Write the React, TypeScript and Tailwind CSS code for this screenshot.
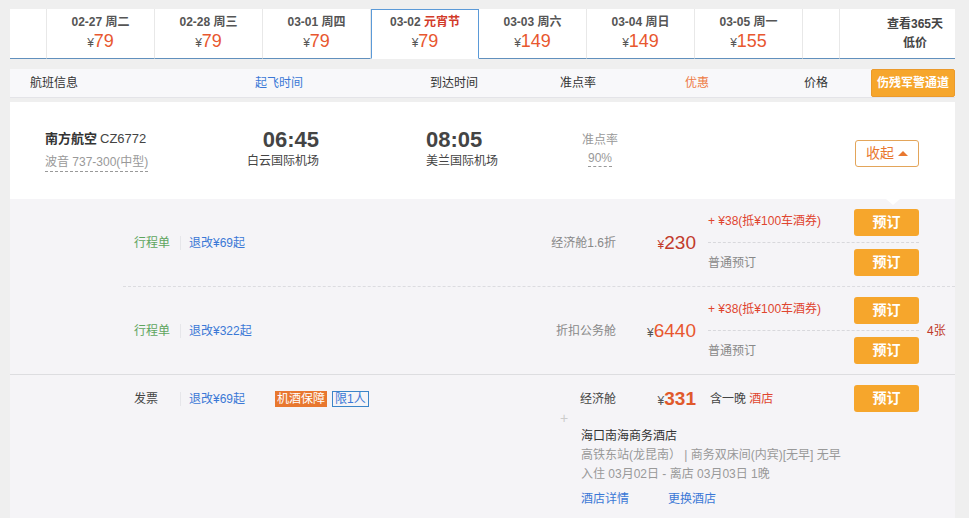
import React from "react";

const dates = [
  { d: "02-27", w: "周二", p: "79" },
  { d: "02-28", w: "周三", p: "79" },
  { d: "03-01", w: "周四", p: "79" },
  { d: "03-02", w: "元宵节", p: "79", sel: true },
  { d: "03-03", w: "周六", p: "149" },
  { d: "03-04", w: "周日", p: "149" },
  { d: "03-05", w: "周一", p: "155" },
];

function BookBtn() {
  return (
    <div className="flex h-[27px] w-[65px] items-center justify-center rounded-[3px] bg-[#f6a62c] text-[14px] font-bold text-white">
      预订
    </div>
  );
}

function LeftInfo({ label, labelCls, refund }: { label: string; labelCls: string; refund: string }) {
  return (
    <div className="flex items-center">
      <div className={"w-[46px] " + labelCls}>{label}</div>
      <div className="h-[14px] w-px bg-[#e6e6ea]" />
      <div className="ml-[8px] text-[#3b78d6]">{refund}</div>
    </div>
  );
}

function FareRow({
  cabin,
  price,
  priceCls,
  yenCls,
  extra,
}: {
  cabin: string;
  price: string;
  priceCls: string;
  yenCls: string;
  extra?: string;
}) {
  return (
    <div className="flex h-[87px] items-center">
      <div className="flex flex-1 items-center pl-[124px]">
        <LeftInfo label="行程单" labelCls="text-[#5ea55e]" refund={cabin === "折扣公务舱" ? "退改¥322起" : "退改¥69起"} />
      </div>
      <div className="w-[120px] text-right text-[#888]">{cabin}</div>
      <div className="w-[80px] text-right">
        <span className={"text-[12px] " + yenCls}>¥</span>
        <span className={"text-[19px] leading-[22px] " + priceCls}>{price}</span>
      </div>
      <div className="ml-[12px] flex w-[211px] flex-col">
        <div className="flex h-[27px] items-center justify-between">
          <span className="-mt-[3px] text-[#e0452f]">+ ¥38(抵¥100车酒券)</span>
          <BookBtn />
        </div>
        <div className="mt-[6px] border-t border-dashed border-[#d8d8dc]" />
        <div className="mt-[6px] flex h-[27px] items-center justify-between">
          <span className="text-[#888]">普通预订</span>
          <BookBtn />
        </div>
      </div>
      <div className="w-[36px] pl-[8px] text-[#c0392b]">{extra}</div>
    </div>
  );
}

export default function App() {
  return (
    <div className="min-h-[518px] bg-[#efefef] pt-[9px] font-[Liberation_Sans,Noto_Sans_CJK_SC,sans-serif] text-[12px] text-[#333]">
      <div className="ml-[10px] w-[945px]">
        {/* date bar */}
        <div className="flex h-[50px] bg-white">
          <div className="w-[37px] border-r border-b border-r-[#e8e8e8] border-b-[#6190bd]" />
          {dates.map((x) =>
            x.sel ? (
              <div
                key={x.d}
                className="flex w-[108px] flex-col items-center border border-[#5b9ad8] border-b-white bg-white pt-[5px]"
              >
                <div className="text-[12px] font-bold leading-[14px] text-[#555]">
                  {x.d} <span className="text-[#d23b2a]">{x.w}</span>
                </div>
                <div className="mt-[1px] leading-[22px]">
                  <span className="text-[12px] text-[#555]">¥</span>
                  <span className="text-[18px] text-[#e8572f]">{x.p}</span>
                </div>
              </div>
            ) : (
              <div
                key={x.d}
                className="flex w-[108px] flex-col items-center border-r border-b border-r-[#e8e8e8] border-b-[#6190bd] pt-[6px]"
              >
                <div className="text-[12px] font-bold leading-[14px] text-[#555]">
                  {x.d} {x.w}
                </div>
                <div className="mt-[1px] leading-[22px]">
                  <span className="text-[12px] text-[#555]">¥</span>
                  <span className="text-[18px] text-[#e8572f]">{x.p}</span>
                </div>
              </div>
            )
          )}
          <div className="w-[37px] border-r border-b border-r-[#e8e8e8] border-b-[#6190bd]" />
          <div className="flex w-[115px] flex-col items-end border-b border-b-[#6190bd] pr-[12px] pt-[6px]">
            <div className="flex flex-col items-center text-[12px] font-bold leading-[19px] text-[#444]">
              <span>查看365天</span>
              <span>低价</span>
            </div>
          </div>
        </div>

        {/* header row */}
        <div className="mt-[10px] flex h-[28px] items-center bg-[#f8f8fa] pl-[20px] shadow-[0_1px_0_#e4e4e8]">
          <div className="w-[225px]">航班信息</div>
          <div className="w-[175px] text-[#3b78d6]">起飞时间</div>
          <div className="w-[130px]">到达时间</div>
          <div className="w-[125px]">准点率</div>
          <div className="w-[119px] text-[#ee7a45]">优惠</div>
          <div className="w-[67px]">价格</div>
          <div className="flex h-[28px] w-[84px] items-center justify-center whitespace-nowrap rounded-[2px] border border-[#eb9a2c] bg-[#f6a62c] text-[12px] font-bold text-white">
            伤残军警通道
          </div>
        </div>

        {/* flight row */}
        <div className="relative mt-[5px] flex h-[97px] items-center bg-white">
          <div className="w-[229px] pl-[35px]">
            <div className="leading-[20px]">
              <span className="text-[13px] font-bold text-[#333]">南方航空</span>
              <span className="ml-[3px] text-[13px] text-[#444]">CZ6772</span>
            </div>
            <div className="mt-[4px] inline-block border-b border-dashed border-[#999] leading-[18px] text-[#999]">
              波音 737-300(中型)
            </div>
          </div>
          <div className="-mt-[2px] w-[80px] text-right">
            <div className="text-[22px] font-bold leading-[24px] text-[#444]">06:45</div>
            <div className="leading-[19px] text-[#444]">白云国际机场</div>
          </div>
          <div className="-mt-[2px] ml-[107px] w-[130px]">
            <div className="text-[22px] font-bold leading-[24px] text-[#444]">08:05</div>
            <div className="leading-[19px] text-[#444]">美兰国际机场</div>
          </div>
          <div className="-mt-[4px] flex w-[88px] flex-col items-center text-[#999]">
            <div className="leading-[19px]">准点率</div>
            <div className="border-b border-dashed border-[#999] leading-[16px]">90%</div>
          </div>
          <div className="ml-auto mr-[36px] mt-[6px] flex h-[27px] w-[64px] items-center justify-center gap-[4px] rounded-[3px] border border-[#e3a55a] text-[14px] text-[#e8782f]">
            <span>收起</span>
            <span className="h-0 w-0 border-x-[5px] border-b-[5px] border-x-transparent border-b-[#e8782f]" />
          </div>
          <span className="absolute bottom-[-6px] left-[876px] h-0 w-0 border-x-[7px] border-t-[6px] border-x-transparent border-t-white" />
        </div>

        {/* expanded fares */}
        <div className="bg-[#f5f4f7]">
          <FareRow cabin="经济舱1.6折" price="230" priceCls="text-[#c23a2b]" yenCls="text-[#c23a2b]" />
          <div className="ml-[113px] border-t border-dashed border-[#dcdce0]" />
          <FareRow cabin="折扣公务舱" price="6440" priceCls="text-[#e8572f]" yenCls="text-[#555]" extra="4张" />
          <div className="border-t border-[#dddde0]" />

          <div className="pb-[20px] pt-[10px]">
            <div className="flex h-[27px] items-center">
              <div className="flex flex-1 items-center pl-[124px]">
                <LeftInfo label="发票" labelCls="text-[#444]" refund="退改¥69起" />
                <span className="ml-[30px] bg-[#e8772f] px-[2px] leading-[16px] text-white">机酒保障</span>
                <span className="ml-[5px] border border-[#3b85c8] px-[2px] leading-[14px] text-[#3b78d6]">限1人</span>
              </div>
              <div className="w-[120px] text-right text-[#444]">经济舱</div>
              <div className="w-[80px] text-right">
                <span className="text-[12px] text-[#555]">¥</span>
                <span className="text-[19px] font-bold leading-[22px] text-[#e0592b]">331</span>
              </div>
              <div className="ml-[12px] flex w-[211px] items-center justify-between">
                <span className="pl-[2px] text-[#444]">
                  含一晚 <span className="text-[#e0452f]">酒店</span>
                </span>
                <BookBtn />
              </div>
              <div className="w-[36px]" />
            </div>
            <div className="ml-[550px] text-[14px] leading-[12px] text-[#ccc]">+</div>
            <div className="ml-[571px] mt-[3px] leading-[19px]">
              <div className="text-[#333]">海口南海商务酒店</div>
              <div className="text-[#999]">高铁东站(龙昆南） | 商务双床间(内宾)[无早] 无早</div>
              <div className="text-[#999]">入住 03月02日 - 离店 03月03日 1晚</div>
              <div className="mt-[6px] flex text-[#3b78d6]">
                <span className="w-[87px]">酒店详情</span>
                <span>更换酒店</span>
              </div>
            </div>
          </div>
        </div>
      </div>
    </div>
  );
}
